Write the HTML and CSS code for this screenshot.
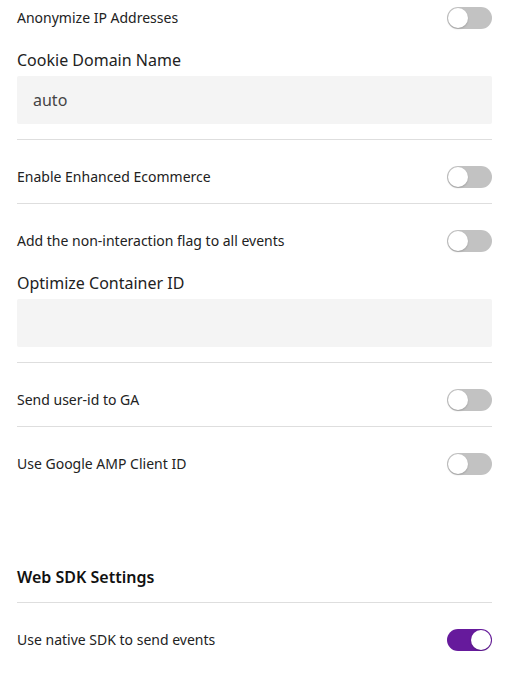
FILE: index.html
```html
<!DOCTYPE html>
<html>
<head>
<meta charset="utf-8">
<link rel="stylesheet" href="styles.css">
</head>
<body>
<div class="settings">
  <div class="toggle-row first">
    <span class="row-label">Anonymize IP Addresses</span>
    <span class="toggle"><span class="knob"></span></span>
  </div>
  <div class="field">
    <div class="field-label">Cookie Domain Name</div>
    <div class="input">auto</div>
  </div>
  <div class="divider"></div>
  <div class="toggle-row">
    <span class="row-label">Enable Enhanced Ecommerce</span>
    <span class="toggle"><span class="knob"></span></span>
  </div>
  <div class="divider"></div>
  <div class="toggle-row">
    <span class="row-label">Add the non-interaction flag to all events</span>
    <span class="toggle"><span class="knob"></span></span>
  </div>
  <div class="field">
    <div class="field-label">Optimize Container ID</div>
    <div class="input"></div>
  </div>
  <div class="divider"></div>
  <div class="toggle-row">
    <span class="row-label">Send user-id to GA</span>
    <span class="toggle"><span class="knob"></span></span>
  </div>
  <div class="divider"></div>
  <div class="toggle-row">
    <span class="row-label">Use Google AMP Client ID</span>
    <span class="toggle"><span class="knob"></span></span>
  </div>
  <h2 class="section-title">Web SDK Settings</h2>
  <div class="divider tight"></div>
  <div class="toggle-row">
    <span class="row-label">Use native SDK to send events</span>
    <span class="toggle on"><span class="knob"></span></span>
  </div>
</div>
</body>
</html>
```
FILE: styles.css
```css
html, body {
  margin: 0;
  padding: 0;
  background: #ffffff;
}
body {
  font-family: "Noto Sans", "Open Sans", sans-serif;
  color: #222;
}
.settings {
  padding: 0 18px 0 17px;
  display: flex;
  flex-direction: column;
}
.toggle-row {
  display: flex;
  align-items: center;
  justify-content: space-between;
  height: 22px;
  margin-top: 26px;
}
.toggle-row.first {
  margin-top: 7px;
}
.row-label {
  font-size: 14px;
  line-height: 20px;
  color: #222;
}
.toggle {
  position: relative;
  width: 45px;
  height: 22px;
  border-radius: 11px;
  background: #c2c2c2;
  box-sizing: border-box;
  flex: none;
}
.toggle .knob {
  position: absolute;
  left: 1px;
  top: 1px;
  width: 20px;
  height: 20px;
  border-radius: 50%;
  background: #fff;
  box-shadow: 0 1px 2px rgba(0,0,0,0.18);
}
.toggle.on {
  background: #661a9c;
}
.toggle.on .knob {
  left: auto;
  right: 1px;
}
.field {
  margin-top: 20px;
  display: flex;
  flex-direction: column;
}
.field-label {
  font-size: 16px;
  line-height: 22px;
  color: #222;
}
.input {
  margin-top: 5px;
  height: 48px;
  background: #f4f4f4;
  border-radius: 2px;
  font-size: 16px;
  line-height: 48px;
  padding-left: 16px;
  color: #444;
}
.divider {
  margin-top: 15px;
  height: 1px;
  background: #dedede;
}
.divider.tight {
  margin-top: 14px;
}
.section-title {
  margin: 91px 0 0 0;
  font-size: 16px;
  line-height: 22px;
  font-weight: 600;
  color: #111;
}
```
